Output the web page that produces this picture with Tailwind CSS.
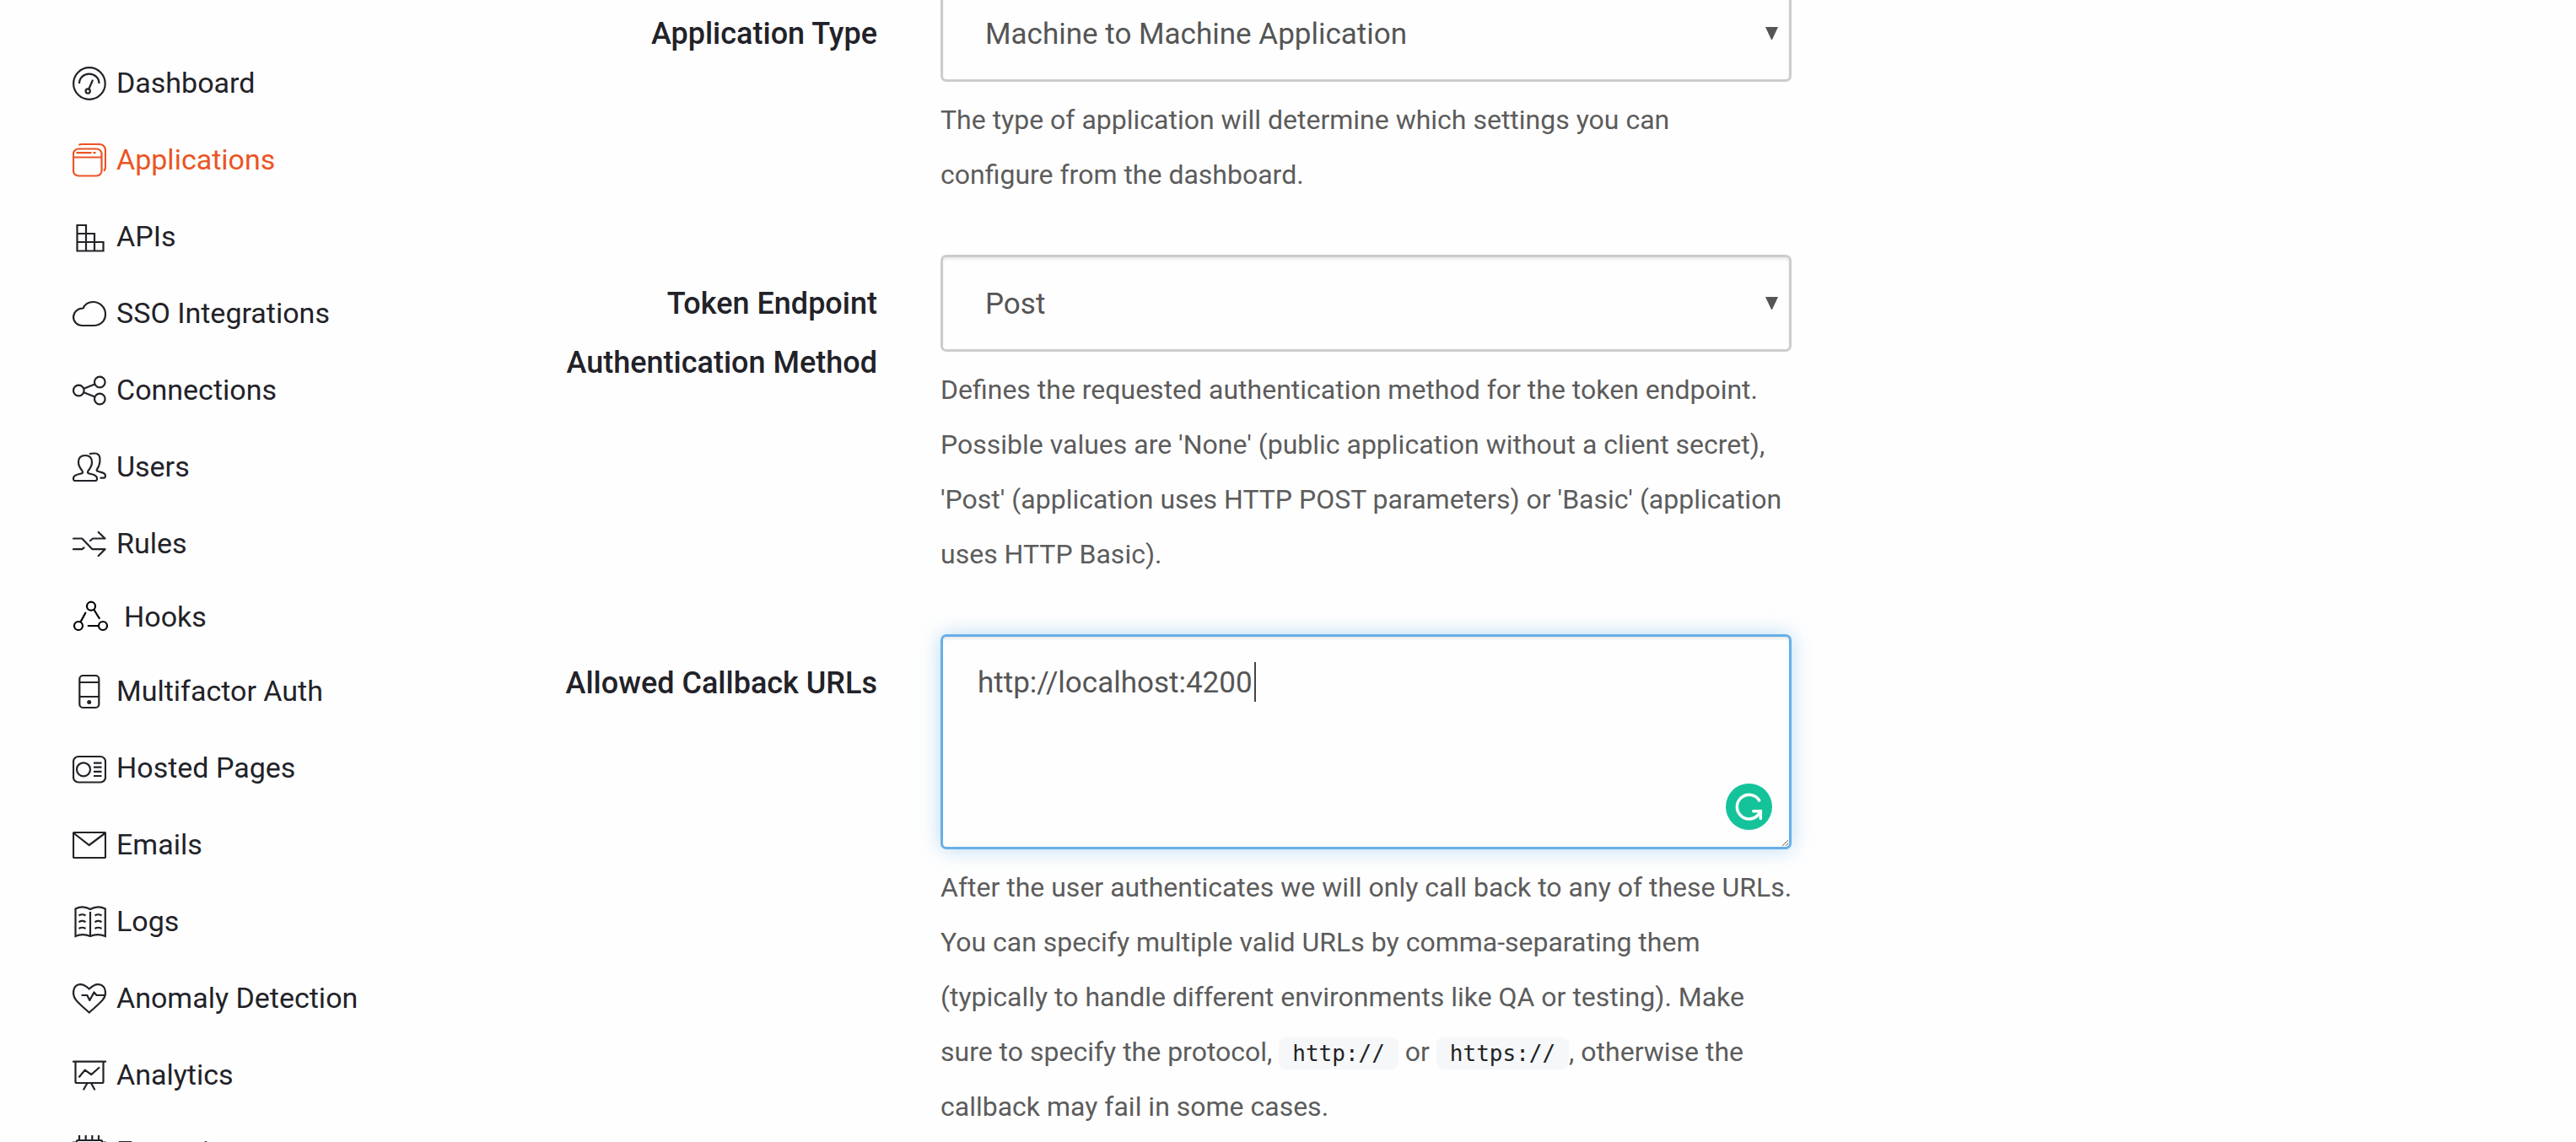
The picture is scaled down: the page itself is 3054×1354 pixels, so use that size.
<!DOCTYPE html>
<html lang="en">
<head>
<meta charset="utf-8">
<title>Application Settings</title>
<meta name="viewport" content="width=device-width, initial-scale=1">
<script src="https://cdn.jsdelivr.net/npm/@tailwindcss/browser@4"></script>
</head>
<body class="bg-[#fefefe] font-['Roboto',sans-serif] text-[#222228]">
<div class="flex h-screen items-start overflow-hidden">

  <!-- Sidebar -->
  <nav aria-label="Main" class="w-[560px] shrink-0 pt-[52px] pl-[86px] text-[34px] leading-none">
    <ul>
      <li><a href="#" class="flex h-[91px] items-center gap-3">
        <svg class="h-[45px] w-10 shrink-0" viewBox="0 0 40 45" fill="none" stroke="currentColor" stroke-width="2.2" stroke-linecap="round"><circle cx="19.900" cy="24" r="18.800"/><path d="M8 24C8 17.500 13 12.700 19.700 12.700S31.500 17.500 31.500 24" stroke-linecap="butt"/><circle cx="18.200" cy="33" r="2.600"/><path d="M19.300 30.500L23.700 20.500"/></svg>
        <span>Dashboard</span></a></li>
      <li><a href="#" aria-current="page" class="flex h-[91px] items-center gap-3 text-[#eb5424]">
        <svg class="h-[45px] w-10 shrink-0" viewBox="0 0 40 45" fill="none" stroke="currentColor" stroke-width="2.2"><path d="M7.500 6C9 5 10 5 11.500 5H32a7 7 0 0 1 7 7v20c0 2-.5 3.500-2 4.500"/><rect x="1" y="10.500" width="33.500" height="32" rx="6"/><path d="M1 20.500H34M4.500 15.200H22.500M24.500 15.200H27.500"/></svg>
        <span>Applications</span></a></li>
      <li><a href="#" class="flex h-[91px] items-center gap-3">
        <svg class="h-[45px] w-10 shrink-0" viewBox="0 0 40 45" fill="none" stroke="currentColor" stroke-width="2.2"><path d="M5.500 10H16V40.500M5.500 9V40.500H36.500V30H5.500M5.500 20H26V40.500"/></svg>
        <span>APIs</span></a></li>
      <li><a href="#" class="flex h-[91px] items-center gap-3">
        <svg class="h-[45px] w-10 shrink-0" viewBox="0 0 40 45" fill="none" stroke="currentColor" stroke-width="2.2"><path d="M11.500 38C5.500 38 1 33.500 1 28S5.500 17.500 12.500 17.500C14.500 13 18.500 10 24.500 10C32.500 10 39 16.500 39 24.500S33 38 25 38Z"/></svg>
        <span>SSO Integrations</span></a></li>
      <li><a href="#" class="flex h-[91px] items-center gap-3">
        <svg class="h-[45px] w-10 shrink-0" viewBox="0 0 40 45" fill="none" stroke="currentColor" stroke-width="2.2"><circle cx="7.300" cy="24" r="6.300"/><circle cx="32.300" cy="14" r="6.300"/><circle cx="32.300" cy="34" r="6.300"/><path d="M13.300 21.800L26.500 16.400M13.300 26.200L26.500 31.600"/></svg>
        <span>Connections</span></a></li>
      <li><a href="#" class="flex h-[91px] items-center gap-3">
        <svg class="h-[45px] w-10 shrink-0" viewBox="0 0 40 45" fill="none" stroke="currentColor" stroke-width="2.2" stroke-linejoin="round"><path d="M11.500 31C12.500 30 12 29 11 27.500C8.500 24.500 7 22 7 18C7 12.500 10 10 15 10S23 12.500 23 18C23 22 21.500 24.500 19 27.500C18 29 17.500 30 18.500 31C21 32.500 29 32 29 37C29 38.500 28.500 40 27.500 40H2.500C1.500 40 1 38.500 1 37C1 32 9 32.500 11.500 31Z"/><path d="M20 8.300C22 7.500 24 7.500 26 7.500C31 7.500 32.500 10.500 32.500 14.500C32.500 20 31.500 23 29 26.500C28 28.500 29.500 28.500 31 29C35 30.500 39 30.500 39 34C39 36 38.500 36.700 37 36.700H32.500"/></svg>
        <span>Users</span></a></li>
      <li><a href="#" class="flex h-[91px] items-center gap-3">
        <svg class="h-[45px] w-10 shrink-0" viewBox="0 0 40 45" fill="none" stroke="currentColor" stroke-width="2.2" stroke-linecap="round" stroke-linejoin="round"><path d="M1 17.500H11.300L23.500 30.200H38.500L30.700 38M1 30.200H11.300L13.500 28.300M21 20L24 17.500H38.500L30.700 10"/></svg>
        <span>Rules</span></a></li>
      <li><a href="#" class="flex h-[84px] items-center gap-[21px]">
        <svg class="h-11 w-10 shrink-0 overflow-visible text-black" viewBox="0 0 40 44" fill="none" stroke="currentColor" stroke-width="2.2" stroke-linecap="round"><circle cx="22" cy="9.700" r="5"/><circle cx="7" cy="33" r="5"/><circle cx="36" cy="33" r="5"/><path d="M9.700 28L15.300 17.700M25.500 14L31.700 24M18.700 33H30.500"/></svg>
        <span>Hooks</span></a></li>
      <li><a href="#" class="flex h-[91px] items-center gap-3">
        <svg class="h-[45px] w-10 shrink-0" viewBox="0 0 40 45" fill="none" stroke="currentColor" stroke-width="2.2"><rect x="8.300" y="5" width="23" height="38" rx="4"/><path d="M8.300 13H31.300M8.300 30H31.300"/><circle cx="19.700" cy="36.500" r="2.500" fill="currentColor" stroke="none"/></svg>
        <span>Multifactor Auth</span></a></li>
      <li><a href="#" class="flex h-[91px] items-center gap-3">
        <svg class="h-[45px] w-10 shrink-0" viewBox="0 0 40 45" fill="none" stroke="currentColor" stroke-width="2.2"><rect x="1" y="10" width="38" height="30.500" rx="6"/><circle cx="13" cy="25.300" r="8"/><path d="M25 17.700H34.500M25 22.700H34.500M25 27.800H34.500M25 33H34.500"/></svg>
        <span>Hosted Pages</span></a></li>
      <li><a href="#" class="flex h-[91px] items-center gap-3">
        <svg class="h-[45px] w-10 shrink-0" viewBox="0 0 40 45" fill="none" stroke="currentColor" stroke-width="2.2"><rect x="1" y="9" width="38" height="30" rx="1"/><path d="M1 9.500L19.700 24L39 9.500"/></svg>
        <span>Emails</span></a></li>
      <li><a href="#" class="flex h-[91px] items-center gap-3">
        <svg class="h-[45px] w-10 shrink-0" viewBox="0 0 40 45" fill="none" stroke="currentColor" stroke-width="2.2"><path d="M3.500 8.500C9 5.500 15 5.500 21 9C27 5.500 33 5.500 38.800 8.500V41C33 38.500 27 38.500 21 41C15 38.500 9 38.500 3.500 41ZM21 12V41"/><path d="M7.500 16.500Q11.500 14 15.500 16.500M7.500 24.200Q11.500 21.700 15.500 24.200M7.500 32Q11.500 29.500 15.500 32M26.500 16.500Q30.500 14 34.500 16.500M26.500 24.200Q30.500 21.700 34.500 24.200M26.500 32Q30.500 29.500 34.500 32"/></svg>
        <span>Logs</span></a></li>
      <li><a href="#" class="flex h-[91px] items-center gap-3">
        <svg class="h-[45px] w-10 shrink-0" viewBox="0 0 40 45" fill="none" stroke="currentColor" stroke-width="2.2"><path d="M19.700 12.500C26 6.500 30 6.500 33 7.500C37.500 9 39 13 39 17.500C39 23 36.500 26 19.700 40.500C3 26 1 23 1 17.500C1 13 2.500 9 6.500 7.500C10 6.500 13.500 6.500 19.700 12.500Z"/><path d="M10.500 20H17.300L20.300 26L25.500 16.500L28.500 20H39" stroke-linejoin="round"/></svg>
        <span>Anomaly Detection</span></a></li>
      <li><a href="#" class="flex h-[91px] items-center gap-3">
        <svg class="h-[45px] w-10 shrink-0" viewBox="0 0 40 45" fill="none" stroke="currentColor" stroke-width="2.2" stroke-linecap="round" stroke-linejoin="round"><path d="M1 7.700H39M3.500 8V31.500Q3.500 33 5 33H35Q36.500 33 36.500 31.500V8M17 34L13.300 40.500M22.500 34L26 40.500M8 25.700L14.700 17.700L22.300 23L31.300 15"/></svg>
        <span>Analytics</span></a></li>
      <li><a href="#" class="flex h-[91px] items-center gap-3">
        <svg class="h-[45px] w-10 shrink-0" viewBox="0 0 40 45" fill="none" stroke="currentColor" stroke-width="2.2"><rect x="5" y="10" width="30" height="29" rx="1"/><path d="M8 4V10M15.700 4V10M23.300 4V10M31 4V10M8 39V45M15.700 39V45M23.300 39V45M31 39V45M0 12.500H5M35 12.500H40M0 20H5M35 20H40M0 28H5M35 28H40M0 36H5M35 36H40"/></svg>
        <span>Extensions</span></a></li>
    </ul>
  </nav>

  <!-- Settings form, scrolled partway down -->
  <main class="-mt-[18px] min-w-0 flex-1">
    <form class="flex flex-col gap-[62px]">
      <div class="grid grid-cols-[480px_minmax(0,1009px)] gap-x-[75px]">
        <label for="app-type" class="pt-[23px] text-right text-[36px] leading-[70px] font-medium">Application Type</label>
        <div>
          <div class="relative">
            <select id="app-type" class="block h-[115px] w-full appearance-none rounded-[7px] border-3 border-[#ccc] bg-[#fefefe] px-[50px] pt-[3px] text-[35px] text-[#555] shadow-[inset_0_3px_3px_rgba(0,0,0,0.075)]"><option>Machine to Machine Application</option></select>
            <svg class="pointer-events-none absolute top-[50px] right-4 h-[15px] w-[15px] text-[#555]" viewBox="0 0 15 15" fill="currentColor"><path d="M0 0H15L8 15H7Z"/></svg>
          </div>
          <p class="mt-[13px] -mr-8 text-[32px] leading-[65px] text-[#5c5c5c]">The type of application will determine which settings you can<br>configure from the dashboard.</p>
        </div>
      </div>

      <div class="grid grid-cols-[480px_minmax(0,1009px)] gap-x-[75px]">
        <label for="auth-method" class="pt-[23px] text-right text-[36px] leading-[70px] font-medium">Token Endpoint Authentication Method</label>
        <div>
          <div class="relative">
            <select id="auth-method" class="block h-[115px] w-full appearance-none rounded-[7px] border-3 border-[#ccc] bg-[#fefefe] px-[50px] pt-[3px] text-[35px] text-[#555] shadow-[inset_0_3px_3px_rgba(0,0,0,0.075)]"><option>Post</option></select>
            <svg class="pointer-events-none absolute top-[50px] right-4 h-[15px] w-[15px] text-[#555]" viewBox="0 0 15 15" fill="currentColor"><path d="M0 0H15L8 15H7Z"/></svg>
          </div>
          <p class="mt-[13px] -mr-8 text-[32px] leading-[65px] text-[#5c5c5c]">Defines the requested authentication method for the token endpoint.<br>Possible values are 'None' (public application without a client secret),<br>'Post' (application uses HTTP POST parameters) or 'Basic' (application<br>uses HTTP Basic).</p>
        </div>
      </div>

      <div class="grid grid-cols-[480px_minmax(0,1009px)] gap-x-[75px]">
        <label for="callbacks" class="pt-[23px] text-right text-[36px] leading-[70px] font-medium">Allowed Callback URLs</label>
        <div>
          <div class="relative">
            <textarea id="callbacks" spellcheck="false" class="block h-[255px] w-full resize rounded-[7px] border-3 border-[#66afe9] bg-[#fefefe] px-[41px] py-[30px] text-[35px] leading-[50px] text-[#555] shadow-[inset_0_3px_3px_rgba(0,0,0,0.075),0_0_24px_rgba(102,175,233,0.45)] outline-none">http://localhost:4200</textarea>
            <span class="pointer-events-none absolute top-[33px] left-[372px] h-[47px] w-0.5 bg-[#444]"></span>
            <button type="button" aria-label="Check writing" class="absolute right-[23px] bottom-[23px] size-[55px] rounded-full bg-[#15c39a] text-white">
              <svg class="size-[55px]" viewBox="0 0 55 55" fill="none" stroke="currentColor" stroke-width="3.500" stroke-linecap="round"><path d="M39.700 20A14.300 14.300 0 1 0 38.500 37L41 33.500"/><path d="M32.800 32.700H41.300V41.500"/></svg>
            </button>
          </div>
          <p class="mt-[13px] -mr-8 text-[32px] leading-[65px] text-[#5c5c5c]">After the user authenticates we will only call back to any of these URLs.<br>You can specify multiple valid URLs by comma-separating them<br>(typically to handle different environments like QA or testing). Make<br>sure to specify the protocol, <code class="rounded-lg bg-[#f5f7f9] px-4 py-1 font-['DejaVu_Sans_Mono',monospace] text-[26px] leading-none text-[#222]">http://</code> or <code class="rounded-lg bg-[#f5f7f9] px-4 py-1 font-['DejaVu_Sans_Mono',monospace] text-[26px] leading-none text-[#222]">https://</code>, otherwise the<br>callback may fail in some cases.</p>
        </div>
      </div>
    </form>
  </main>
</div>
</body>
</html>
